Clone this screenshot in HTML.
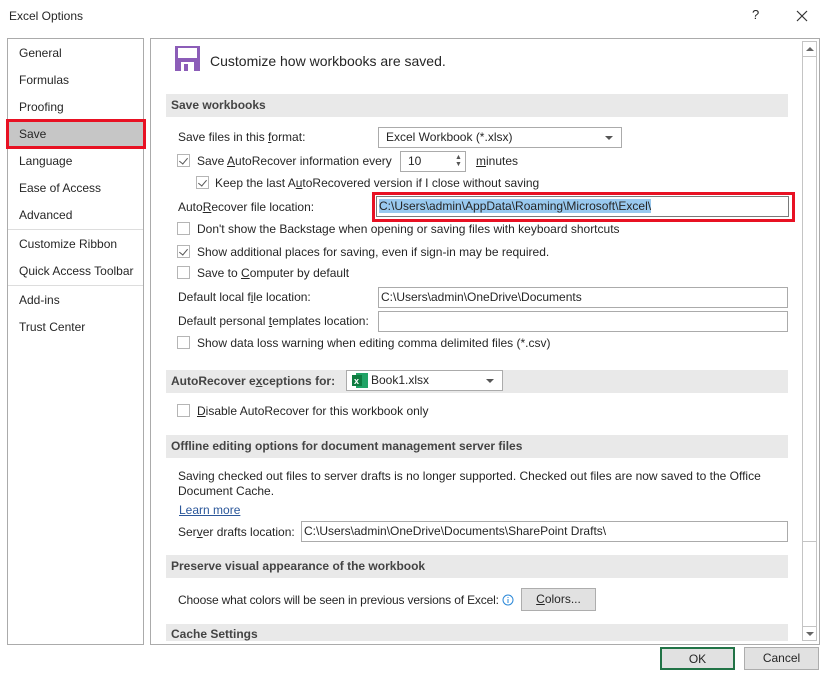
<!DOCTYPE html>
<html><head><meta charset="utf-8"><style>
*{box-sizing:border-box;margin:0;padding:0}
body{width:826px;height:678px;background:#fff;font-family:"Liberation Sans",sans-serif;font-size:12px;color:#262626;position:relative;overflow:hidden}
.a{position:absolute;white-space:nowrap}
.t{line-height:14px}
.nav{left:19px}
.box{position:absolute;border:1px solid #ababab;background:#fff}
.sec{position:absolute;left:166px;width:622px;height:23px;background:#e9e9e9;font-weight:bold;color:#444;padding-left:5px;line-height:23px;font-size:12px}
.cb{position:absolute;width:13px;height:13px;border:1px solid #b5b5b5;background:#fff}
.cb.on::after{content:"";position:absolute;left:3px;top:1px;width:4px;height:7px;border:solid #555;border-width:0 1px 1px 0;transform:rotate(40deg)}
.in{position:absolute;border:1px solid #ababab;background:#fff;height:21px;line-height:19px;padding-left:2px;white-space:nowrap;overflow:hidden}
.btn{position:absolute;background:#e1e1e1;border:1px solid #adadad;text-align:center;line-height:20px}
.dd::after{content:"";position:absolute;right:8px;top:8px;border-left:4px solid transparent;border-right:4px solid transparent;border-top:4px solid #555}
u{text-decoration:underline}
</style></head><body>
<div class="a t" style="left:9px;top:9px">Excel Options</div>
<div class="a" style="left:752px;top:7px;font-size:13px">?</div>
<svg class="a" style="left:796px;top:10px" width="12" height="12"><path d="M1 1L11 11M11 1L1 11" stroke="#333" stroke-width="1.2"/></svg>

<div class="box" style="left:7px;top:38px;width:137px;height:607px"></div>
<div class="a t nav" style="top:46px">General</div>
<div class="a t nav" style="top:73px">Formulas</div>
<div class="a t nav" style="top:100px">Proofing</div>
<div class="a" style="left:6px;top:119px;width:140px;height:30px;background:#c6c6c6;border:3px solid #e81123"></div>
<div class="a t nav" style="top:127px">Save</div>
<div class="a t nav" style="top:154px">Language</div>
<div class="a t nav" style="top:181px">Ease of Access</div>
<div class="a t nav" style="top:208px">Advanced</div>
<div class="a" style="left:8px;top:229px;width:135px;height:1px;background:#ddd"></div>
<div class="a t nav" style="top:237px">Customize Ribbon</div>
<div class="a t nav" style="top:264px">Quick Access Toolbar</div>
<div class="a" style="left:8px;top:285px;width:135px;height:1px;background:#ddd"></div>
<div class="a t nav" style="top:293px">Add-ins</div>
<div class="a t nav" style="top:320px">Trust Center</div>

<div class="box" style="left:150px;top:38px;width:670px;height:607px"></div>
<div class="a" style="left:802px;top:41px;width:15px;height:600px;border:1px solid #c4c4c4;background:#fff"></div>
<div class="a" style="left:802px;top:56px;width:15px;height:486px;border:1px solid #c4c4c4;background:#fff"></div>
<div class="a" style="left:806px;top:47px;border-left:4px solid transparent;border-right:4px solid transparent;border-bottom:4px solid #666"></div>
<div class="a" style="left:802px;top:626px;width:15px;height:15px;border:1px solid #c4c4c4"></div>
<div class="a" style="left:806px;top:632px;border-left:4px solid transparent;border-right:4px solid transparent;border-top:4px solid #666"></div>

<svg class="a" style="left:175px;top:46px" width="25" height="25"><rect x="0" y="0" width="25" height="25" fill="#8c5db8"/><rect x="3" y="2" width="19" height="10" fill="#fff"/><rect x="6" y="16" width="13" height="9" fill="#fff"/><rect x="9" y="18" width="4" height="7" fill="#8c5db8"/></svg>
<div class="a" style="left:210px;top:53px;font-size:14px">Customize how workbooks are saved.</div>

<div class="sec" style="top:94px">Save workbooks</div>
<div class="a t" style="left:178px;top:130px">Save files in this <u>f</u>ormat:</div>
<div class="in dd" style="left:378px;top:127px;width:244px;padding-left:7px">Excel Workbook (*.xlsx)</div>
<div class="cb on" style="left:177px;top:154px"></div>
<div class="a t" style="left:197px;top:154px">Save <u>A</u>utoRecover information every</div>
<div class="in" style="left:400px;top:151px;width:66px;padding-left:7px">10</div>
<div class="a" style="left:455px;top:154px;font-size:7px;line-height:7px;color:#555">▲<br>▼</div>
<div class="a t" style="left:476px;top:154px"><u>m</u>inutes</div>
<div class="cb on" style="left:196px;top:176px"></div>
<div class="a t" style="left:215px;top:176px">Keep the last A<u>u</u>toRecovered version if I close without saving</div>
<div class="a t" style="left:178px;top:200px">Auto<u>R</u>ecover file location:</div>
<div class="a" style="left:372px;top:192px;width:423px;height:30px;border:3px solid #e81123"></div>
<div class="in" style="left:376px;top:196px;width:413px;height:21px;border-color:#7a7a7a;padding-left:2px"><span style="background:#99c9ef">C:\Users\admin\AppData\Roaming\Microsoft\Excel\</span></div>
<div class="cb" style="left:177px;top:222px"></div>
<div class="a t" style="left:197px;top:222px">Don't show the Backstage when opening or saving files with keyboard shortcuts</div>
<div class="cb on" style="left:177px;top:245px"></div>
<div class="a t" style="left:197px;top:245px">Show additional places for saving, even if sign-in may be required.</div>
<div class="cb" style="left:177px;top:266px"></div>
<div class="a t" style="left:197px;top:266px">Save to <u>C</u>omputer by default</div>
<div class="a t" style="left:178px;top:290px">Default local f<u>i</u>le location:</div>
<div class="in" style="left:378px;top:287px;width:410px">C:\Users\admin\OneDrive\Documents</div>
<div class="a t" style="left:178px;top:314px">Default personal <u>t</u>emplates location:</div>
<div class="in" style="left:378px;top:311px;width:410px"></div>
<div class="cb" style="left:177px;top:336px"></div>
<div class="a t" style="left:197px;top:336px">Show data loss warning when editing comma delimited files (*.csv)</div>

<div class="sec" style="top:370px">AutoRecover e<u>x</u>ceptions for:</div>
<div class="in dd" style="left:346px;top:370px;width:157px;padding-left:24px">Book1.xlsx</div>
<svg class="a" style="left:352px;top:373px" width="16" height="15"><rect x="4" y="0" width="12" height="15" fill="#21a366"/><rect x="0" y="2" width="10" height="11" fill="#107c41"/><text x="2" y="11" font-size="9" font-weight="bold" fill="#fff" font-family="Liberation Sans">x</text></svg>
<div class="cb" style="left:177px;top:404px"></div>
<div class="a t" style="left:197px;top:404px"><u>D</u>isable AutoRecover for this workbook only</div>

<div class="sec" style="top:435px">Offline editing options for document management server files</div>
<div class="a t" style="left:178px;top:469px;line-height:15px">Saving checked out files to server drafts is no longer supported. Checked out files are now saved to the Office<br>Document Cache.</div>
<div class="a t" style="left:179px;top:503px;color:#2b579a"><u>Learn more</u></div>
<div class="a t" style="left:178px;top:525px">Ser<u>v</u>er drafts location:</div>
<div class="in" style="left:301px;top:521px;width:487px">C:\Users\admin\OneDrive\Documents\SharePoint Drafts\</div>

<div class="sec" style="top:555px">Preserve visual appearance of the workbook</div>
<div class="a t" style="left:178px;top:593px;letter-spacing:-0.15px">Choose what colors will be seen in previous versions of Excel:</div>
<svg class="a" style="left:502px;top:594px" width="12" height="12"><circle cx="6" cy="6" r="5" fill="none" stroke="#2b88d8"/><path d="M6 5v4M6 3v1" stroke="#2b88d8"/></svg>
<div class="btn" style="left:521px;top:588px;width:75px;height:23px"><u>C</u>olors...</div>

<div class="sec" style="top:624px;height:17px;line-height:21px;overflow:hidden">Cache Settings</div>

<div class="btn" style="left:660px;top:647px;width:75px;height:23px;border:2px solid #217346">OK</div>
<div class="btn" style="left:744px;top:647px;width:75px;height:23px">Cancel</div>
</body></html>
